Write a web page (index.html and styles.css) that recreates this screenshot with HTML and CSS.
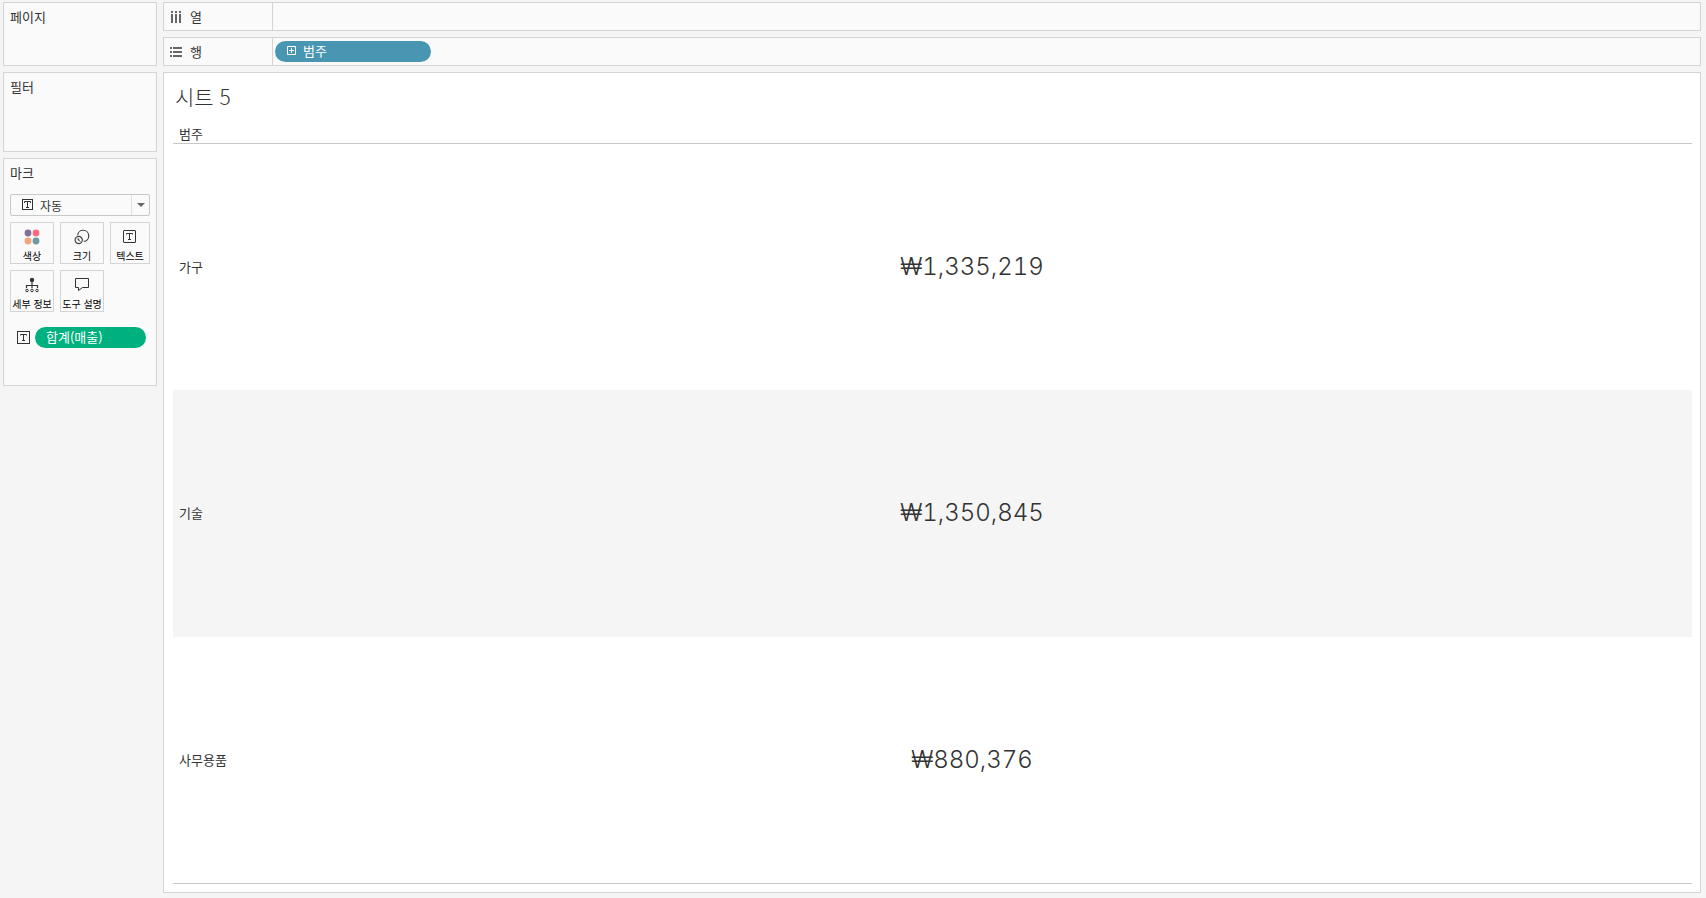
FILE: index.html
```html
<!DOCTYPE html>
<html lang="ko">
<head>
  <meta charset="UTF-8">
  <meta name="viewport" content="width=device-width, initial-scale=1.0">
  <title>시트 5</title>
  <link rel="stylesheet" href="styles.css">
</head>
<body>
  <div class="workspace">
    <aside class="sidebar">
      <section class="card pages">
        <h2>페이지</h2>
      </section>
      <section class="card filters">
        <h2>필터</h2>
      </section>
      <section class="card marks">
        <h2><label for="mark-type">마크</label></h2>

        <div class="mark-type">
          <svg class="mark-type-icon" width="11" height="11" viewBox="0 0 11 11" fill="none" stroke="#333">
            <rect x="0.5" y="0.5" width="10" height="10"/>
            <path d="M2.5 4V2.5h6V4M5.5 2.5v6M4 8.5h3"/>
          </svg>
          <select id="mark-type">
            <option>자동</option>
          </select>
          <span class="mark-type-arrow"></span>
        </div>

        <div class="mark-buttons">
          <button>
            <svg width="16" height="16" viewBox="0 0 16 16">
              <circle cx="4" cy="4" r="3.4" fill="#82709a"/>
              <circle cx="12" cy="4" r="3.4" fill="#fc6b80"/>
              <circle cx="4" cy="12" r="3.4" fill="#f5a57c"/>
              <circle cx="12" cy="12" r="3.4" fill="#6c99a5"/>
            </svg>
            색상
          </button>
          <button>
            <svg width="16" height="16" viewBox="0 0 16 16" fill="none" stroke="#444">
              <path d="M3.6 6.2A5.6 5.6 0 1 1 9.8 12.4" stroke-width="1.2"/>
              <circle cx="4.7" cy="11" r="3.6" stroke-width="1.2"/>
              <path d="M3.2 9.6l3 3M4.7 9.3v2.2"/>
            </svg>
            크기
          </button>
          <button>
            <svg width="16" height="16" viewBox="0 0 16 16" fill="none" stroke="#333">
              <rect x="1.5" y="1.5" width="12" height="12" rx="0.5"/>
              <path d="M4.5 5.5v-1h6v1M7.5 4.5v6M6 10.5h3"/>
            </svg>
            텍스트
          </button>
          <button>
            <svg width="16" height="16" viewBox="0 0 16 16" fill="none" stroke="#333">
              <circle cx="8" cy="3" r="2.2" fill="#333" stroke="none"/>
              <path d="M8 5v6M2.5 11V8.5h11V11" stroke-width="1.2"/>
              <circle cx="3" cy="13.5" r="1.3"/>
              <circle cx="8" cy="13.5" r="1.3"/>
              <circle cx="13" cy="13.5" r="1.3"/>
            </svg>
            세부 정보
          </button>
          <button>
            <svg width="16" height="16" viewBox="0 0 16 16" fill="none" stroke="#333">
              <path d="M1.5 1.5h13v9h-6l-4 3v-3h-3z"/>
            </svg>
            도구 설명
          </button>
        </div>

        <div class="mark-field">
          <svg width="13" height="13" viewBox="0 0 13 13" fill="none" stroke="#333">
            <rect x="0.5" y="0.5" width="12" height="12"/>
            <path d="M3.5 4.5v-1h6v1M6.5 3.5v6M5 9.5h3"/>
          </svg>
          <button class="pill measure">합계(매출)</button>
        </div>
      </section>
    </aside>

    <main class="main">
      <section class="card shelf">
        <h2 class="shelf-label">
          <svg width="12" height="12" viewBox="0 0 12 12" fill="#666">
            <path d="M1 0h2v2H1zM5 0h2v2H5zM9 0h2v2H9zM1 3h2v9H1zM5 3h2v9H5zM9 3h2v9H9z"/>
          </svg>
          열
        </h2>
      </section>
      <section class="card shelf">
        <h2 class="shelf-label">
          <svg width="12" height="12" viewBox="0 0 12 12" fill="#666">
            <path d="M0 1h2v2H0zM0 5h2v2H0zM0 9h2v2H0zM3 1h9v2H3zM3 5h9v2H3zM3 9h9v2H3z"/>
          </svg>
          행
        </h2>
        <button class="pill dimension">
          <svg width="9" height="9" viewBox="0 0 9 9" fill="none" stroke="#fff">
            <path d="M0.5 0.5h8v8h-8zM2 4.5h5M4.5 2v5"/>
          </svg>
          범주
        </button>
      </section>

      <section class="card view">
        <h1>시트 5</h1>
        <table>
          <thead>
            <tr><th>범주</th><td></td></tr>
          </thead>
          <tbody>
            <tr><th>가구</th><td>₩1,335,219</td></tr>
            <tr><th>기술</th><td>₩1,350,845</td></tr>
            <tr><th>사무용품</th><td>₩880,376</td></tr>
          </tbody>
        </table>
      </section>
    </main>
  </div>
</body>
</html>
```

FILE: styles.css
```css
* {
  box-sizing: border-box;
}
body {
  margin: 0;
  background: #f5f5f5;
  color: #333;
  font-family: "Noto Sans CJK KR", sans-serif;
  font-size: 13px;
  line-height: 18px;
}
h1, h2 {
  margin: 0;
  font-size: 13px;
  font-weight: 400;
}
button, select {
  font-family: inherit;
  color: inherit;
}
svg {
  flex: none;
}

.workspace {
  display: flex;
  gap: 6px;
  min-height: 100vh;
  padding: 2px 5px 5px 3px;
}
.sidebar {
  display: flex;
  flex-direction: column;
  gap: 6px;
  width: 154px;
  flex: none;
}
.main {
  display: flex;
  flex-direction: column;
  gap: 6px;
  flex: 1;
}
.card {
  background: #fafafa;
  border: 1px solid #d4d4d4;
}

/* left cards */
.sidebar .card {
  padding: 5px 6px;
}
.pages {
  min-height: 64px;
}
.filters {
  min-height: 80px;
}
.marks {
  min-height: 228px;
}
.mark-type {
  position: relative;
  margin-top: 12px;
}
.mark-type select {
  display: block;
  appearance: none;
  width: 100%;
  height: 22px;
  padding: 0 28px 0 29px;
  border: 1px solid #c8c8c8;
  border-radius: 2px;
  background: #fafafa;
  font-size: 12px;
}
.mark-type-icon {
  position: absolute;
  left: 12px;
  top: 5px;
}
.mark-type-arrow {
  position: absolute;
  top: 1px;
  right: 1px;
  bottom: 1px;
  display: flex;
  align-items: center;
  justify-content: center;
  width: 18px;
  border-left: 1px solid #e0e0e0;
  pointer-events: none;
}
.mark-type-arrow::after {
  content: "";
  border: 4px solid transparent;
  border-top-color: #666;
  border-bottom: 0;
}
.mark-buttons {
  display: grid;
  grid-template-columns: 44px 44px 40px;
  gap: 6px;
  margin-top: 6px;
}
.mark-buttons button {
  display: flex;
  flex-direction: column;
  align-items: center;
  justify-content: space-between;
  height: 42px;
  padding: 6px 0 0;
  border: 1px solid #d4d4d4;
  background: #fafafa;
  color: #000;
  font-size: 10px;
  line-height: 14px;
  white-space: nowrap;
}
.mark-field {
  display: flex;
  align-items: center;
  gap: 5px;
  margin-top: 15px;
  padding: 0 4px 0 7px;
}

.pill {
  display: flex;
  align-items: center;
  gap: 7px;
  height: 21px;
  padding: 0 12px 2px;
  border: 0;
  border-radius: 11px;
  color: #fff;
  font-size: 13px;
  line-height: 18px;
}
.measure {
  flex: 1;
  padding-left: 11px;
  background: #00b180;
}
.dimension {
  width: 156px;
  margin-left: 2px;
  background: #4996b2;
}

/* shelves */
.shelf {
  display: flex;
  align-items: center;
  height: 29px;
}
.shelf-label {
  display: flex;
  align-items: center;
  gap: 8px;
  width: 109px;
  height: 100%;
  padding-left: 6px;
  border-right: 1px solid #d4d4d4;
}

/* sheet */
.view {
  display: flex;
  flex-direction: column;
  flex: 1;
  padding: 8px 8px 8px 9px;
  background: #fff;
}
.view h1 {
  padding-left: 2px;
  font-size: 21px;
  font-weight: 300;
  line-height: 30px;
}
.view table {
  flex: 1;
  display: flex;
  flex-direction: column;
  margin-top: 14px;
  border-bottom: 1px solid #c8c8c8;
}
.view tbody {
  display: flex;
  flex-direction: column;
  flex: 1;
}
.view tr {
  display: flex;
  align-items: center;
}
.view thead tr {
  border-bottom: 1px solid #c8c8c8;
}
.view tbody tr {
  flex: 1;
}
.view tbody tr:nth-child(even) {
  background: #f5f5f5;
}
.view th {
  width: 79px;
  padding: 0 0 0 6px;
  font-weight: 400;
  text-align: left;
}
.view td {
  flex: 1;
  padding: 0;
  color: #333;
  font-family: Inter, sans-serif;
  font-size: 24px;
  font-weight: 300;
  font-variant-numeric: tabular-nums;
  line-height: 36px;
  text-align: center;
}
```
